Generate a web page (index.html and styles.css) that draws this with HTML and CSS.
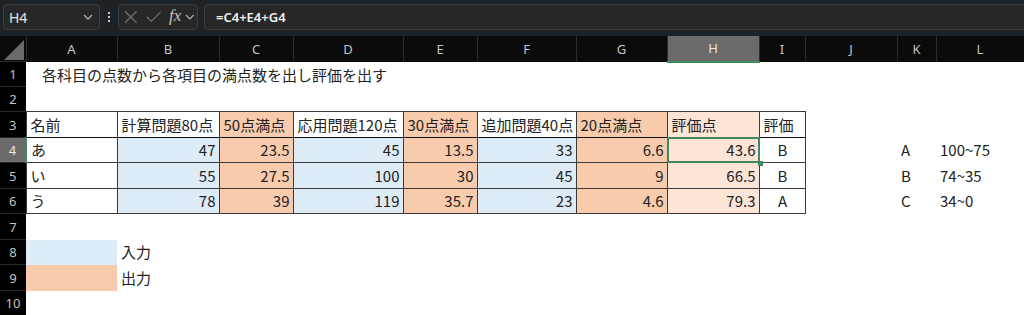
FILE: index.html
```html
<!DOCTYPE html>
<html lang="ja">
<head>
  <meta charset="UTF-8">
  <title>評価表</title>
  <link rel="stylesheet" href="styles.css">
</head>
<body>
  <!-- 数式バー -->
  <div class="formula-bar">
    <div class="name-box">
      <span>H4</span>
      <svg class="chev" width="10" height="6" viewBox="0 0 10 6"><polyline points="1,1 5,5 9,1"/></svg>
    </div>
    <div class="grip"><i></i><i></i><i></i></div>
    <div class="fx-box">
      <svg class="icon" width="14" height="14" viewBox="0 0 14 14"><line x1="1" y1="1" x2="13" y2="13"/><line x1="13" y1="1" x2="1" y2="13"/></svg>
      <svg class="icon" width="16" height="12" viewBox="0 0 16 12"><polyline points="1,6 5.5,10.5 15,1"/></svg>
      <span class="fx">fx</span>
      <svg class="chev" width="10" height="6" viewBox="0 0 10 6"><polyline points="1,1 5,5 9,1"/></svg>
    </div>
    <div class="formula-input">=C4+E4+G4</div>
  </div>

  <!-- シート -->
  <table class="sheet">
    <colgroup>
      <col style="width:26px"><col style="width:91px"><col style="width:102px"><col style="width:74px">
      <col style="width:110px"><col style="width:74px"><col style="width:99px"><col style="width:91px">
      <col style="width:92px"><col style="width:46px"><col style="width:92px"><col style="width:39px">
      <col style="width:88px">
    </colgroup>
    <thead>
      <tr>
        <th class="corner"><svg width="20" height="20" viewBox="0 0 20 20"><polygon points="20,0 20,20 0,20"/></svg></th>
        <th>A</th><th>B</th><th>C</th><th>D</th><th>E</th><th>F</th><th>G</th>
        <th class="active-col">H</th><th>I</th><th>J</th><th>K</th><th>L</th>
      </tr>
    </thead>
    <tbody>
      <tr class="r25">
        <th>1</th><td class="title" colspan="12">各科目の点数から各項目の満点数を出し評価を出す</td>
      </tr>
      <tr class="r25"><th>2</th><td colspan="12"></td></tr>
      <tr class="r26 head-row">
        <th>3</th>
        <td class="tb">名前</td>
        <td class="tb">計算問題80点</td>
        <td class="tb out">50点満点</td>
        <td class="tb">応用問題120点</td>
        <td class="tb out">30点満点</td>
        <td class="tb">追加問題40点</td>
        <td class="tb out">20点満点</td>
        <td class="tb score">評価点</td>
        <td class="tb">評価</td>
        <td colspan="3"></td>
      </tr>
      <tr class="r25">
        <th class="active-row">4</th>
        <td class="tb">あ</td>
        <td class="tb in num">47</td>
        <td class="tb out num">23.5</td>
        <td class="tb in num">45</td>
        <td class="tb out num">13.5</td>
        <td class="tb in num">33</td>
        <td class="tb out num">6.6</td>
        <td class="tb score num selected">43.6</td>
        <td class="tb center">B</td>
        <td></td><td class="legend">A</td><td class="legend">100~75</td>
      </tr>
      <tr class="r26">
        <th>5</th>
        <td class="tb">い</td>
        <td class="tb in num">55</td>
        <td class="tb out num">27.5</td>
        <td class="tb in num">100</td>
        <td class="tb out num">30</td>
        <td class="tb in num">45</td>
        <td class="tb out num">9</td>
        <td class="tb score num">66.5</td>
        <td class="tb center">B</td>
        <td></td><td class="legend">B</td><td class="legend">74~35</td>
      </tr>
      <tr class="r25">
        <th>6</th>
        <td class="tb">う</td>
        <td class="tb in num">78</td>
        <td class="tb out num">39</td>
        <td class="tb in num">119</td>
        <td class="tb out num">35.7</td>
        <td class="tb in num">23</td>
        <td class="tb out num">4.6</td>
        <td class="tb score num">79.3</td>
        <td class="tb center">A</td>
        <td></td><td class="legend">C</td><td class="legend">34~0</td>
      </tr>
      <tr class="r26"><th>7</th><td colspan="12"></td></tr>
      <tr class="r25"><th>8</th><td class="in"></td><td>入力</td><td colspan="10"></td></tr>
      <tr class="r26"><th>9</th><td class="out"></td><td>出力</td><td colspan="10"></td></tr>
      <tr class="r25"><th>10</th><td colspan="12"></td></tr>
    </tbody>
  </table>
</body>
</html>
```

FILE: styles.css
```css
:root {
  --input: #ddebf7;
  --output: #f8cbad;
  --score: #fce4d6;
  --line: #3a3a3a;
  --select: #3f8a5c;
  --header-bg: #0b0b0b;
  --header-text: #c4c4c4;
}

body {
  margin: 0;
  background: #ffffff;
  font-family: "Noto Sans CJK JP", "Noto Sans", sans-serif;
  overflow: hidden;
}

/* 数式バー */
.formula-bar {
  display: flex;
  align-items: stretch;
  height: 36px;
  box-sizing: border-box;
  padding: 4px 0 6px 3px;
  background: #1c2226;
}

.name-box,
.fx-box,
.formula-input {
  box-sizing: border-box;
  background: #272727;
  border: 1px solid #3d3d3d;
  border-radius: 4px;
  display: flex;
  align-items: center;
}

.name-box {
  width: 97px;
  padding: 0 6px 0 5px;
  justify-content: space-between;
  color: #e6e6e6;
  font-family: "Noto Sans", sans-serif;
  font-size: 14px;
}

.chev polyline {
  fill: none;
  stroke: #b0b0b0;
  stroke-width: 1.3;
}

.grip {
  width: 18px;
  display: flex;
  flex-direction: column;
  align-items: center;
  justify-content: center;
  gap: 2px;
}

.grip i {
  width: 2px;
  height: 2px;
  background: #c8c8c8;
}

.fx-box {
  width: 80px;
  padding: 0 2px 0 5px;
}

.fx-box .icon {
  margin-right: 8px;
}

.fx-box .icon line,
.fx-box .icon polyline {
  fill: none;
  stroke: #6f6f6f;
  stroke-width: 1.3;
}

.fx {
  font-family: "Liberation Serif", serif;
  font-style: italic;
  font-size: 17px;
  color: #c4c4c4;
  margin: -2px 4px 0 0;
}

.formula-input {
  flex: 1;
  margin: 0 -8px 0 6px;
  padding-left: 11px;
  color: #f0f0f0;
  font-family: "Noto Sans", sans-serif;
  font-size: 13px;
  font-weight: 600;
}

/* シート */
.sheet {
  table-layout: fixed;
  border-collapse: collapse;
  width: 1024px;
}

.sheet thead th {
  height: 24px;
  padding: 0;
  background: var(--header-bg);
  color: var(--header-text);
  font-family: "Noto Sans", sans-serif;
  font-weight: normal;
  font-size: 13px;
  border-right: 1px solid #2c2c2c;
}

.sheet thead th.corner {
  text-align: right;
  vertical-align: bottom;
  padding: 0 2px 1px 0;
  line-height: 0;
}

.corner polygon {
  fill: #6b6b6b;
}

.sheet thead th.active-col {
  background: #6b6b6b;
  color: #e8e8e8;
  border-bottom: 2px solid var(--select);
}

.sheet tbody th {
  padding: 0;
  background: #000000;
  color: var(--header-text);
  font-family: "Noto Sans", sans-serif;
  font-weight: normal;
  font-size: 13px;
  border-top: 1px solid #2a2a2a;
}

.sheet tbody th.active-row {
  background: #6b6b6b;
  color: #e8e8e8;
  border-right: 2px solid var(--select);
}

.r25 { height: 25px; }
.r26 { height: 26px; }

.sheet td {
  padding: 0 3px 0 4px;
  font-size: 15px;
  line-height: 20px;
  color: #222222;
  white-space: nowrap;
  overflow: visible;
}

.sheet td.title {
  padding-left: 16px;
}

.tb {
  border: 1px solid var(--line);
}

.head-row .tb {
  border-bottom-color: #111111;
}

.in { background: var(--input); }
.out { background: var(--output); }
.score { background: var(--score); }

.num { text-align: right; }
.center { text-align: center; }

.legend {
  padding-left: 3px;
}

.selected {
  position: relative;
}

.selected::after {
  content: "";
  position: absolute;
  inset: -1px;
  border: 2px solid var(--select);
}

.selected::before {
  content: "";
  position: absolute;
  right: -4px;
  bottom: -4px;
  width: 5px;
  height: 5px;
  background: var(--select);
  z-index: 1;
}
```
